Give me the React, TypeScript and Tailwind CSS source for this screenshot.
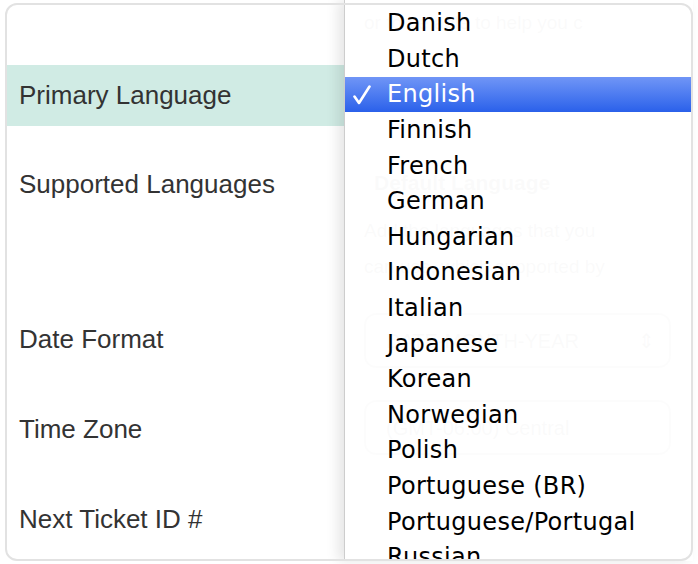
import React from "react";

const LANGS = [
  "Danish",
  "Dutch",
  "English",
  "Finnish",
  "French",
  "German",
  "Hungarian",
  "Indonesian",
  "Italian",
  "Japanese",
  "Korean",
  "Norwegian",
  "Polish",
  "Portuguese (BR)",
  "Portuguese/Portugal",
  "Russian",
  "Spanish",
];

const SELECTED = "English";

function Check() {
  return (
    <svg className="absolute left-[7px] top-[8px]" width="20" height="20" viewBox="0 0 20 20" fill="none">
      <path d="M2.5 11.5 L7 18 L17.5 1.5" stroke="white" strokeWidth="2.6" strokeLinecap="round" strokeLinejoin="round" />
    </svg>
  );
}

function LanguageMenu() {
  return (
    <div className="absolute left-[339px] right-0 top-[-3px] bottom-0 z-10 overflow-hidden bg-white/[0.97] border-l border-[#cdcdcd] shadow-[-6px_0_12px_rgba(0,0,0,0.10)] pt-[5.5px]">
      {LANGS.map(l => {
        const on = l === SELECTED;
        return (
          <div
            key={l}
            className={
              on
                ? "relative flex h-[35.6px] items-center pl-[42px] bg-gradient-to-b from-[#7095f6] to-[#2a60ea] text-white"
                : "relative flex h-[35.6px] items-center pl-[42px] text-black"
            }
          >
            {on && <Check />}
            <span className="text-[24px] leading-none tracking-[0.3px]" style={{ fontFamily: "'DejaVu Sans', sans-serif" }}>
              {l}
            </span>
          </div>
        );
      })}
    </div>
  );
}

function Ghost() {
  // the settings fields sitting under the open menu, seen through it
  return (
    <div className="flex flex-col text-[#666] text-[19px] pl-[18px]">
      <div className="h-[62px] pt-[6px] whitespace-nowrap overflow-hidden">
        or to be able to help you c
      </div>
      <div className="h-[62px]" />
      <div className="h-[167px] pt-[40px] flex flex-col">
        <div className="text-[21px] font-semibold pl-[10px]">Default Language</div>
        <div className="mt-[18px] whitespace-nowrap overflow-hidden">Add the languages that you</div>
        <div className="mt-[8px] whitespace-nowrap overflow-hidden">can use, which supported by</div>
      </div>
      <div className="h-[90px] pt-[19px] pr-[22px]">
        <div className="h-[55px] rounded-[12px] border-2 border-[#aaa] flex items-center pl-[20px] pr-[14px] text-[20px]">
          <span className="flex-1">DATE-MONTH-YEAR</span>
          <span>⇕</span>
        </div>
      </div>
      <div className="h-[91px] pt-[16px] pr-[22px]">
        <div className="h-[55px] rounded-[12px] border-2 border-[#aaa] flex items-center pl-[20px] text-[20px] whitespace-nowrap overflow-hidden">
          (GMT-06:00) Central
        </div>
      </div>
    </div>
  );
}

export default function App() {
  const label = "text-[26px] leading-[30px] text-[#333]";
  return (
    <div
      className="w-[698px] h-[564px] bg-white px-[5px] pt-[3px] pb-[3px]"
      style={{ fontFamily: "'Liberation Sans', Arial, sans-serif" }}
    >
      <div className="relative h-[558px] rounded-[12px] bg-white">
        <div className="flex h-full overflow-hidden rounded-[12px]">
          <div className="w-[341px] shrink-0 flex flex-col">
            <div className="h-[62px]" />
            <div className="h-[62px] bg-[#d0ebe4] flex items-center pl-[14px]">
              <span className={label + " text-[#1e3832]"}>Primary Language</span>
            </div>
            <div className="h-[167px] pt-[43px] pl-[14px]">
              <span className={label}>Supported Languages</span>
            </div>
            <div className="h-[90px] flex items-center pl-[14px] pt-[4px]">
              <span className={label}>Date Format</span>
            </div>
            <div className="h-[91px] flex items-center pl-[14px] pt-[6px]">
              <span className={label}>Time Zone</span>
            </div>
            <div className="h-[90px] flex items-center pl-[14px] pt-[6px]">
              <span className={label}>Next Ticket ID #</span>
            </div>
          </div>
          <div className="flex-1 min-w-0">
            <Ghost />
          </div>
        </div>
        <LanguageMenu />
        <div className="pointer-events-none absolute inset-0 z-20 rounded-[12px] border-2 border-[#e2e2e2]" />
      </div>
    </div>
  );
}
